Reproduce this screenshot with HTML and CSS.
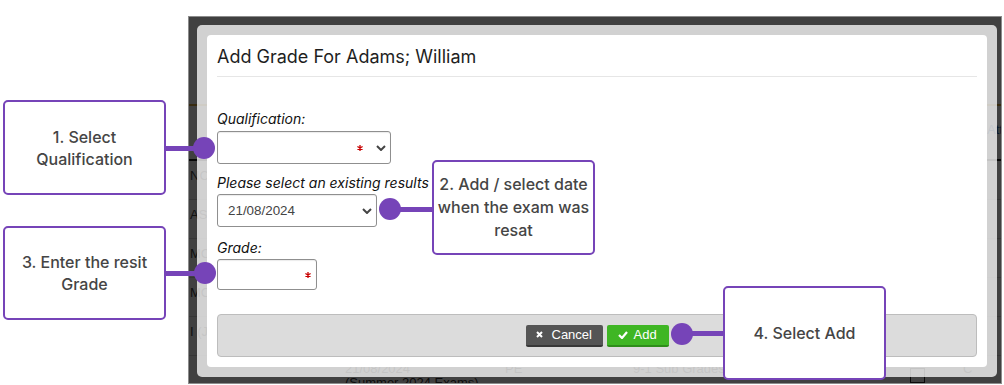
FILE: index.html
```html
<!DOCTYPE html>
<html lang="en">
<head>
<meta charset="utf-8">
<title>Add Grade</title>
<link rel="stylesheet" href="styles.css">
</head>
<body>
<div class="page">
  <div class="shot">
    <div class="bg">
      <div class="bg-top"></div>
      <div class="bg-band"></div>
      <div class="bg-head"><span class="bg-link">Atti</span></div>
      <div class="bg-row"><span class="cell-first">NC</span></div>
      <div class="bg-row"><span class="cell-first">AS</span></div>
      <div class="bg-row"><span class="cell-first">MC</span></div>
      <div class="bg-row"><span class="cell-first">MC</span></div>
      <div class="bg-row"><span class="cell-first">I (JP</span></div>
      <div class="bg-row bg-last">
        <span class="cell-date">21/08/2024<br>(Summer 2024 Exams)</span>
        <span class="cell-sub">PE</span>
        <span class="cell-grade">9-1 Sub Grades</span>
        <span class="cell-check"></span>
        <span class="cell-end">C</span>
      </div>
    </div>
    <div class="overlay">
      <div class="frame">
        <div class="modal">
          <div class="modal-head"><h1 class="modal-title">Add Grade For Adams; William</h1></div>
          <div class="modal-body">
            <div class="lbl">Qualification:</div>
            <div class="field field-qual">
              <svg class="req" width="6" height="6" viewBox="0 0 6 6"><path d="M3 0v6M0.4 1.5l5.2 3M0.4 4.5l5.2-3" stroke="#c80000" stroke-width="1.3"/></svg>
              <svg class="chev" width="10" height="6" viewBox="0 0 10 6"><path d="M1 1l4 4 4-4" stroke="#444" stroke-width="2" fill="none"/></svg>
            </div>
            <div class="lbl lbl-2">Please select an existing results</div>
            <div class="field field-date">
              <span class="val">21/08/2024</span>
              <svg class="chev" width="10" height="6" viewBox="0 0 10 6"><path d="M1 1l4 4 4-4" stroke="#444" stroke-width="2" fill="none"/></svg>
            </div>
            <div class="lbl lbl-3">Grade:</div>
            <div class="field field-grade">
              <svg class="req" width="6" height="6" viewBox="0 0 6 6"><path d="M3 0v6M0.4 1.5l5.2 3M0.4 4.5l5.2-3" stroke="#c80000" stroke-width="1.3"/></svg>
            </div>
          </div>
          <div class="modal-foot">
            <button class="btn btn-cancel"><svg width="7" height="7" viewBox="0 0 7 7"><path d="M1 1l5 5M6 1l-5 5" stroke="#fff" stroke-width="2"/></svg><span>Cancel</span></button>
            <button class="btn btn-add"><svg width="10" height="8" viewBox="0 0 10 8"><path d="M1 4l3 3 5-6" stroke="#fff" stroke-width="2.2" fill="none"/></svg><span>Add</span></button>
          </div>
        </div>
      </div>
    </div>
  </div>
</div>

<div class="line line-1"></div><div class="dot dot-1"></div>
<div class="line line-2"></div><div class="dot dot-2"></div>
<div class="line line-3"></div><div class="dot dot-3"></div>
<div class="line line-4"></div><div class="dot dot-4"></div>

<div class="callout callout-1">1. Select Qualification</div>
<div class="callout callout-2">2. Add / select date when the exam was resat</div>
<div class="callout callout-3">3. Enter the resit Grade</div>
<div class="callout callout-4">4. Select Add</div>
</body>
</html>
```

FILE: styles.css
```css
* { box-sizing: border-box; margin: 0; padding: 0; }
html, body { width: 1004px; height: 385px; overflow: hidden; background: #fff; }
body { position: relative; font-family: "Liberation Sans", Arial, sans-serif; }

.page { padding: 16px 0 0 188px; }
.shot {
  position: relative;
  width: 814px;
  height: 368px;
  border: 1px solid #8c8c8c;
  overflow: hidden;
  background: #fff;
}

/* page underneath the modal */
.bg { font-size: 13px; color: #333; }
.bg-top { height: 87px; }
.bg-band { height: 2px; background: #e0ad3c; }
.bg-head { height: 55px; border-bottom: 2px solid #1e1e1e; padding: 16px 0 0 798px; line-height: 16px; }
.bg-link { color: #1c5fa8; white-space: nowrap; }
.bg-row { height: 39px; border-bottom: 1px solid #d8d8d8; padding: 7px 0 0 1px; line-height: 16px; display: flex; white-space: nowrap; }
.bg-last { border-bottom: 0; padding-top: 6px; line-height: 14px; }
.cell-first { color: #444; }
.cell-date { margin-left: 155px; width: 160px; }
.cell-sub { width: 128px; }
.cell-grade { width: 277px; }
.cell-check { width: 15px; height: 15px; border: 1px solid #222; margin-top: 6px; }
.cell-end { margin-left: 38px; }

.overlay {
  position: absolute;
  inset: 0;
  background: rgba(0, 0, 0, 0.75);
  padding: 8px 0 0 8px;
}
.frame {
  width: 800px;
  height: 352px;
  background: rgba(255, 255, 255, 0.76);
  border-radius: 5px;
  padding: 10px;
}
.modal {
  height: 332px;
  background: #fff;
  border-radius: 4px;
  padding: 10px;
}
.modal-head { padding-bottom: 7px; border-bottom: 1px solid #e6e6e6; }
.modal-title { font-family: Inter, "Liberation Sans", sans-serif; font-weight: 400; font-size: 18px; line-height: 24px; color: #1e1e1e; }

.modal-body { padding-top: 33px; }
.lbl { font-family: Inter, "Liberation Sans", sans-serif; font-style: italic; font-size: 14px; line-height: 17px; color: #111; white-space: nowrap; }
.lbl-2 { margin-top: 10px; }
.lbl-3 { margin-top: 12px; }

.field {
  display: flex;
  align-items: center;
  justify-content: flex-end;
  height: 33px;
  margin-top: 4px;
  border: 1px solid #8f8f8f;
  border-radius: 3px;
  background: #fff;
  box-shadow: inset 0 1px 1px rgba(0, 0, 0, 0.08);
}
.field-qual { width: 174px; padding-right: 4px; }
.field-qual .req { margin-right: 13px; }
.field-date { width: 160px; margin-top: 3px; padding: 0 4px 0 10px; justify-content: space-between; }
.field-grade { width: 100px; height: 31px; margin-top: 3px; padding-right: 5px; }
.val { font-size: 13.4px; color: #444; }

.modal-foot {
  margin-top: 24px;
  height: 43px;
  background: #dcdcdc;
  border: 1px solid #bdbdbd;
  border-radius: 4px;
  display: flex;
  justify-content: center;
  align-items: center;
  gap: 4px;
}
.btn {
  display: flex;
  align-items: center;
  height: 22px;
  border: 0;
  border-radius: 2px;
  color: #fff;
  font-family: "Liberation Sans", Arial, sans-serif;
  font-size: 13px;
  line-height: 20px;
}
.btn-cancel { width: 77px; padding-left: 10px; gap: 9px; background: #555; border-bottom: 2px solid #383838; }
.btn-add { width: 62px; padding-left: 11px; gap: 6px; background: #3fb624; border-bottom: 2px solid #2e8d1a; }

/* annotations */
.line { position: absolute; height: 5px; background: #7644b8; }
.dot { position: absolute; width: 22px; height: 22px; border-radius: 50%; background: #7644b8; }
.line-1 { left: 163px; top: 146px; width: 40px; }
.dot-1 { left: 193px; top: 137px; }
.line-2 { left: 392px; top: 207px; width: 42px; }
.dot-2 { left: 379px; top: 198px; }
.line-3 { left: 164px; top: 271px; width: 40px; }
.dot-3 { left: 194px; top: 262px; }
.line-4 { left: 682px; top: 331px; width: 43px; }
.dot-4 { left: 671px; top: 323px; }

.callout {
  position: absolute;
  width: 163px;
  height: 95px;
  border: 2px solid #7644b8;
  border-radius: 5px;
  background: #fff;
  display: flex;
  align-items: center;
  justify-content: center;
  text-align: center;
  padding: 0 3px;
  font-family: Inter, "Liberation Sans", sans-serif;
  font-weight: 500;
  font-size: 16px;
  line-height: 22px;
  color: #454545;
}
.callout-1 { left: 3px; top: 100px; }
.callout-2 { left: 432px; top: 160px; line-height: 23px; }
.callout-3 { left: 3px; top: 226px; height: 94px; }
.callout-4 { left: 723px; top: 286px; height: 94px; }
```
